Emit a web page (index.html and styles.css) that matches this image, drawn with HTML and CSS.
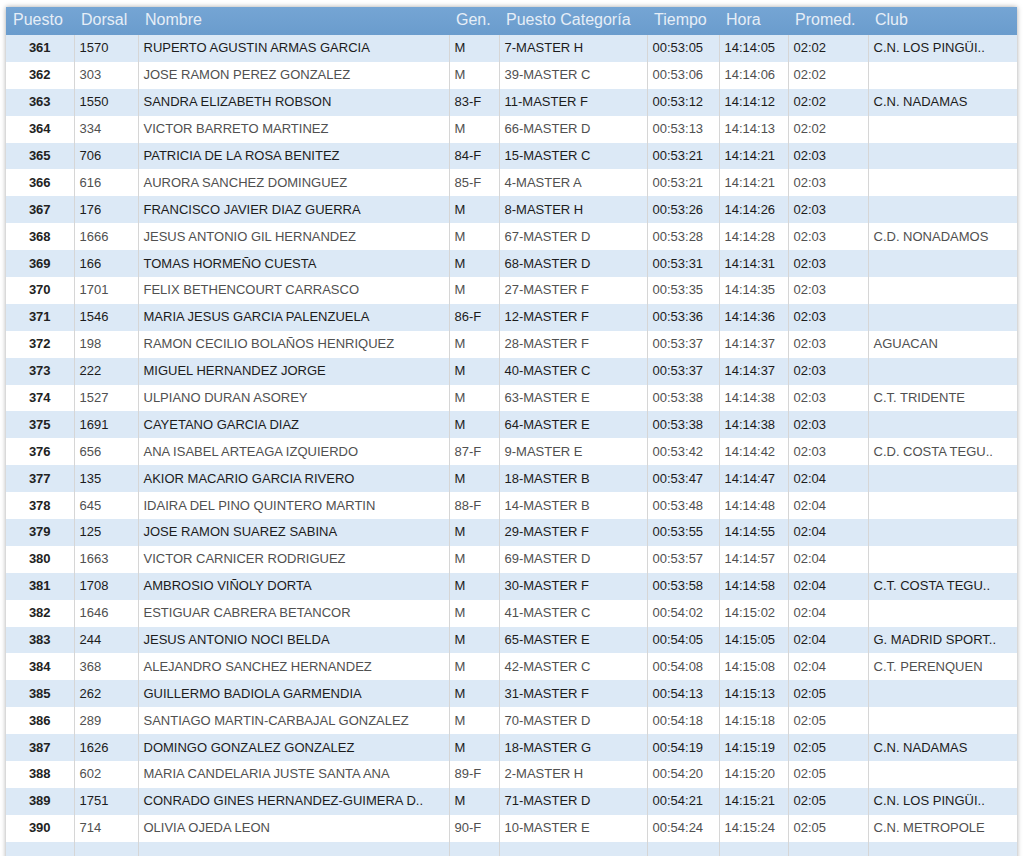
FILE: index.html
```html
<!DOCTYPE html>
<html>
<head>
<meta charset="utf-8">
<link rel="stylesheet" href="styles.css">
</head>
<body>
<div class="wrap">
<table class="results">
<colgroup>
<col class="c-puesto"><col class="c-dorsal"><col class="c-nombre"><col class="c-gen"><col class="c-cat"><col class="c-tiempo"><col class="c-hora"><col class="c-prom"><col class="c-club">
</colgroup>
<thead>
<tr><th>Puesto</th><th>Dorsal</th><th>Nombre</th><th>Gen.</th><th>Puesto Categoría</th><th>Tiempo</th><th>Hora</th><th>Promed.</th><th>Club</th></tr>
</thead>
<tbody>
<tr class="alt"><td class="pos">361</td><td>1570</td><td>RUPERTO AGUSTIN ARMAS GARCIA</td><td>M</td><td>7-MASTER H</td><td>00:53:05</td><td>14:14:05</td><td>02:02</td><td>C.N. LOS PINGÜI..</td></tr>
<tr><td class="pos">362</td><td>303</td><td>JOSE RAMON PEREZ GONZALEZ</td><td>M</td><td>39-MASTER C</td><td>00:53:06</td><td>14:14:06</td><td>02:02</td><td></td></tr>
<tr class="alt"><td class="pos">363</td><td>1550</td><td>SANDRA ELIZABETH ROBSON</td><td>83-F</td><td>11-MASTER F</td><td>00:53:12</td><td>14:14:12</td><td>02:02</td><td>C.N. NADAMAS</td></tr>
<tr><td class="pos">364</td><td>334</td><td>VICTOR BARRETO MARTINEZ</td><td>M</td><td>66-MASTER D</td><td>00:53:13</td><td>14:14:13</td><td>02:02</td><td></td></tr>
<tr class="alt"><td class="pos">365</td><td>706</td><td>PATRICIA DE LA ROSA BENITEZ</td><td>84-F</td><td>15-MASTER C</td><td>00:53:21</td><td>14:14:21</td><td>02:03</td><td></td></tr>
<tr><td class="pos">366</td><td>616</td><td>AURORA SANCHEZ DOMINGUEZ</td><td>85-F</td><td>4-MASTER A</td><td>00:53:21</td><td>14:14:21</td><td>02:03</td><td></td></tr>
<tr class="alt"><td class="pos">367</td><td>176</td><td>FRANCISCO JAVIER DIAZ GUERRA</td><td>M</td><td>8-MASTER H</td><td>00:53:26</td><td>14:14:26</td><td>02:03</td><td></td></tr>
<tr><td class="pos">368</td><td>1666</td><td>JESUS ANTONIO GIL HERNANDEZ</td><td>M</td><td>67-MASTER D</td><td>00:53:28</td><td>14:14:28</td><td>02:03</td><td>C.D. NONADAMOS</td></tr>
<tr class="alt"><td class="pos">369</td><td>166</td><td>TOMAS HORMEÑO CUESTA</td><td>M</td><td>68-MASTER D</td><td>00:53:31</td><td>14:14:31</td><td>02:03</td><td></td></tr>
<tr><td class="pos">370</td><td>1701</td><td>FELIX BETHENCOURT CARRASCO</td><td>M</td><td>27-MASTER F</td><td>00:53:35</td><td>14:14:35</td><td>02:03</td><td></td></tr>
<tr class="alt"><td class="pos">371</td><td>1546</td><td>MARIA JESUS GARCIA PALENZUELA</td><td>86-F</td><td>12-MASTER F</td><td>00:53:36</td><td>14:14:36</td><td>02:03</td><td></td></tr>
<tr><td class="pos">372</td><td>198</td><td>RAMON CECILIO BOLAÑOS HENRIQUEZ</td><td>M</td><td>28-MASTER F</td><td>00:53:37</td><td>14:14:37</td><td>02:03</td><td>AGUACAN</td></tr>
<tr class="alt"><td class="pos">373</td><td>222</td><td>MIGUEL HERNANDEZ JORGE</td><td>M</td><td>40-MASTER C</td><td>00:53:37</td><td>14:14:37</td><td>02:03</td><td></td></tr>
<tr><td class="pos">374</td><td>1527</td><td>ULPIANO DURAN ASOREY</td><td>M</td><td>63-MASTER E</td><td>00:53:38</td><td>14:14:38</td><td>02:03</td><td>C.T. TRIDENTE</td></tr>
<tr class="alt"><td class="pos">375</td><td>1691</td><td>CAYETANO GARCIA DIAZ</td><td>M</td><td>64-MASTER E</td><td>00:53:38</td><td>14:14:38</td><td>02:03</td><td></td></tr>
<tr><td class="pos">376</td><td>656</td><td>ANA ISABEL ARTEAGA IZQUIERDO</td><td>87-F</td><td>9-MASTER E</td><td>00:53:42</td><td>14:14:42</td><td>02:03</td><td>C.D. COSTA TEGU..</td></tr>
<tr class="alt"><td class="pos">377</td><td>135</td><td>AKIOR MACARIO GARCIA RIVERO</td><td>M</td><td>18-MASTER B</td><td>00:53:47</td><td>14:14:47</td><td>02:04</td><td></td></tr>
<tr><td class="pos">378</td><td>645</td><td>IDAIRA DEL PINO QUINTERO MARTIN</td><td>88-F</td><td>14-MASTER B</td><td>00:53:48</td><td>14:14:48</td><td>02:04</td><td></td></tr>
<tr class="alt"><td class="pos">379</td><td>125</td><td>JOSE RAMON SUAREZ SABINA</td><td>M</td><td>29-MASTER F</td><td>00:53:55</td><td>14:14:55</td><td>02:04</td><td></td></tr>
<tr><td class="pos">380</td><td>1663</td><td>VICTOR CARNICER RODRIGUEZ</td><td>M</td><td>69-MASTER D</td><td>00:53:57</td><td>14:14:57</td><td>02:04</td><td></td></tr>
<tr class="alt"><td class="pos">381</td><td>1708</td><td>AMBROSIO VIÑOLY DORTA</td><td>M</td><td>30-MASTER F</td><td>00:53:58</td><td>14:14:58</td><td>02:04</td><td>C.T. COSTA TEGU..</td></tr>
<tr><td class="pos">382</td><td>1646</td><td>ESTIGUAR CABRERA BETANCOR</td><td>M</td><td>41-MASTER C</td><td>00:54:02</td><td>14:15:02</td><td>02:04</td><td></td></tr>
<tr class="alt"><td class="pos">383</td><td>244</td><td>JESUS ANTONIO NOCI BELDA</td><td>M</td><td>65-MASTER E</td><td>00:54:05</td><td>14:15:05</td><td>02:04</td><td>G. MADRID SPORT..</td></tr>
<tr><td class="pos">384</td><td>368</td><td>ALEJANDRO SANCHEZ HERNANDEZ</td><td>M</td><td>42-MASTER C</td><td>00:54:08</td><td>14:15:08</td><td>02:04</td><td>C.T. PERENQUEN</td></tr>
<tr class="alt"><td class="pos">385</td><td>262</td><td>GUILLERMO BADIOLA GARMENDIA</td><td>M</td><td>31-MASTER F</td><td>00:54:13</td><td>14:15:13</td><td>02:05</td><td></td></tr>
<tr><td class="pos">386</td><td>289</td><td>SANTIAGO MARTIN-CARBAJAL GONZALEZ</td><td>M</td><td>70-MASTER D</td><td>00:54:18</td><td>14:15:18</td><td>02:05</td><td></td></tr>
<tr class="alt"><td class="pos">387</td><td>1626</td><td>DOMINGO GONZALEZ GONZALEZ</td><td>M</td><td>18-MASTER G</td><td>00:54:19</td><td>14:15:19</td><td>02:05</td><td>C.N. NADAMAS</td></tr>
<tr><td class="pos">388</td><td>602</td><td>MARIA CANDELARIA JUSTE SANTA ANA</td><td>89-F</td><td>2-MASTER H</td><td>00:54:20</td><td>14:15:20</td><td>02:05</td><td></td></tr>
<tr class="alt"><td class="pos">389</td><td>1751</td><td>CONRADO GINES HERNANDEZ-GUIMERA D..</td><td>M</td><td>71-MASTER D</td><td>00:54:21</td><td>14:15:21</td><td>02:05</td><td>C.N. LOS PINGÜI..</td></tr>
<tr><td class="pos">390</td><td>714</td><td>OLIVIA OJEDA LEON</td><td>90-F</td><td>10-MASTER E</td><td>00:54:24</td><td>14:15:24</td><td>02:05</td><td>C.N. METROPOLE</td></tr>
<tr class="alt"><td class="pos"></td><td></td><td></td><td></td><td></td><td></td><td></td><td></td><td></td></tr>
</tbody>
</table>
</div>
</body>
</html>
```
FILE: styles.css
```css
html, body {
  margin: 0;
  padding: 0;
  background: #ffffff;
  overflow: hidden;
}

.wrap {
  padding: 7px 7px 0 6px;
}

.results {
  width: 1011px;
  border-collapse: collapse;
  table-layout: fixed;
  font-family: "Liberation Sans", Arial, sans-serif;
  font-size: 13px;
  box-shadow: 0 0 5px rgba(0, 0, 0, 0.35);
}

.c-puesto { width: 68px; }
.c-dorsal { width: 64px; }
.c-nombre { width: 311px; }
.c-gen { width: 50px; }
.c-cat { width: 148px; }
.c-tiempo { width: 72px; }
.c-hora { width: 69px; }
.c-prom { width: 80px; }
.c-club { width: 149px; }

.results thead tr {
  height: 28px;
  background: linear-gradient(#75a5d4, #6a9ccd);
}

.results th {
  font-size: 16px;
  font-weight: normal;
  color: #e6eef7;
  text-align: left;
  padding: 0 0 3px 7px;
  white-space: nowrap;
  overflow: hidden;
}

.results tbody tr {
  height: 26.9px;
  background: #ffffff;
  color: #505050;
}

.results tbody tr.alt {
  background: #dce9f6;
  color: #1c1c1c;
}

.results td {
  padding: 0 0 1px 5px;
  white-space: nowrap;
  overflow: hidden;
  border-left: 1px solid #d6d6d6;
}

.results td:first-child {
  border-left: none;
}

.results td.pos {
  text-align: center;
  font-weight: bold;
  color: #222222;
  padding: 0 0 1px 0;
}
```
